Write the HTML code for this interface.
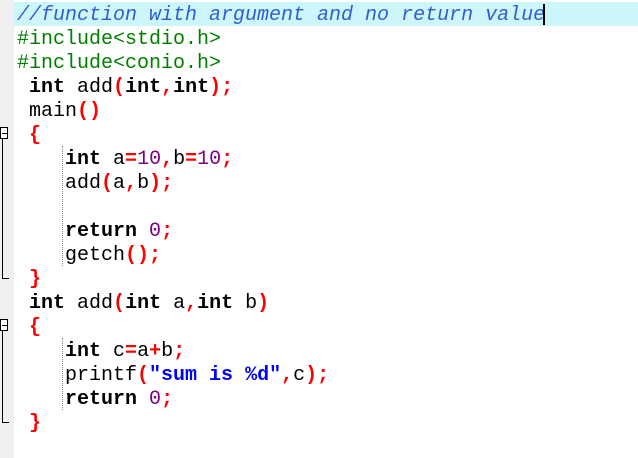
<!DOCTYPE html>
<html><head><meta charset="utf-8"><style>
html,body{margin:0;padding:0;width:638px;height:458px;overflow:hidden;background:#fff}
.g{position:absolute;left:0;top:0;width:14px;height:458px;background:#f0f0f0}
.hl{position:absolute;left:14px;top:2px;width:624px;height:24px;background:#ccf6fa}
.cur{position:absolute;left:543px;top:4px;width:2px;height:21px;background:#000}
pre{position:absolute;left:17px;top:4px;margin:0;font:20px/24px "Liberation Mono",monospace;color:#000}
.c{color:#3060d0;font-style:italic}
.p{color:#008000}
.k{font-weight:bold}
.o{color:#ff0000;font-weight:bold}
.n{color:#800080}
.s{color:#0000ff;font-weight:bold}
.fb{position:absolute;left:0;width:8px;height:12px;border:1px solid #000;background:#fff;box-sizing:border-box}
.fb:after{content:"";position:absolute;left:1px;top:5px;width:5px;height:1px;background:#000}
.fl{position:absolute;left:2px;width:6px;border-left:1px solid #000;border-bottom:1px solid #000}
.dg{position:absolute;left:62px;border-left:1px dotted #888}
</style></head><body>
<div class="g"></div>
<div class="hl"></div>
<div class="fb" style="top:127px"></div>
<div class="fl" style="top:139px;height:139px"></div>
<div class="fb" style="top:319px"></div>
<div class="fl" style="top:331px;height:91px"></div>
<div class="dg" style="top:146px;height:120px"></div>
<div class="dg" style="top:338px;height:72px"></div>
<pre><span class="c">//function with argument and no return value</span>
<span class="p">#include&lt;stdio.h&gt;</span>
<span class="p">#include&lt;conio.h&gt;</span>
 <span class="k">int</span> add<span class="o">(</span><span class="k">int</span><span class="o">,</span><span class="k">int</span><span class="o">);</span>
 main<span class="o">()</span>
 <span class="o">{</span>
    <span class="k">int</span> a<span class="o">=</span><span class="n">10</span><span class="o">,</span>b<span class="o">=</span><span class="n">10</span><span class="o">;</span>
    add<span class="o">(</span>a<span class="o">,</span>b<span class="o">);</span>

    <span class="k">return</span> <span class="n">0</span><span class="o">;</span>
    getch<span class="o">();</span>
 <span class="o">}</span>
 <span class="k">int</span> add<span class="o">(</span><span class="k">int</span> a<span class="o">,</span><span class="k">int</span> b<span class="o">)</span>
 <span class="o">{</span>
    <span class="k">int</span> c<span class="o">=</span>a<span class="o">+</span>b<span class="o">;</span>
    printf<span class="o">(</span><span class="s">"sum is %d"</span><span class="o">,</span>c<span class="o">);</span>
    <span class="k">return</span> <span class="n">0</span><span class="o">;</span>
 <span class="o">}</span></pre>
<div class="cur"></div>
</body></html>
